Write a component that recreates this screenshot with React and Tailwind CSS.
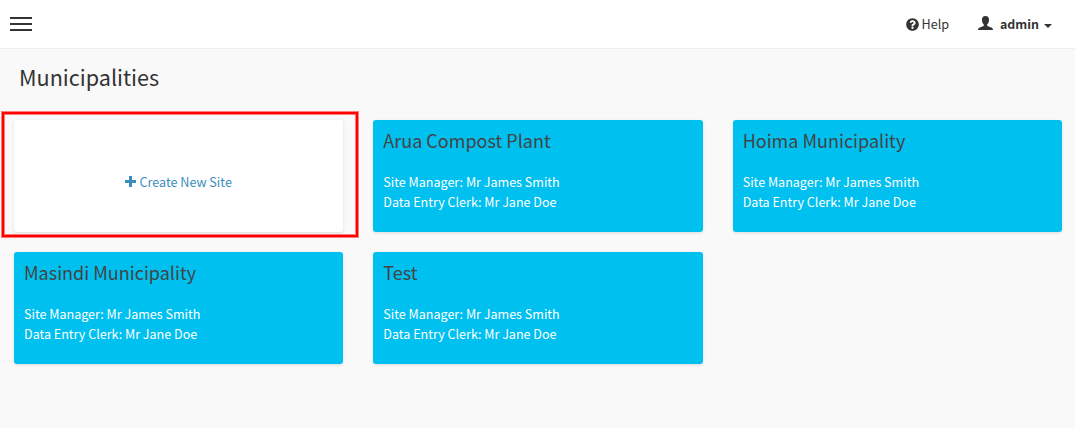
import React from "react";
import { FaQuestionCircle } from "react-icons/fa";

function Card({ title }) {
  return (
    <section className="h-[112px] rounded-[3px] bg-[#00c0ef] px-[10px] pt-2 shadow-[0_1px_3px_rgba(0,0,0,0.12)]">
      <h2 className="whitespace-nowrap text-[18px] leading-6 text-[#444]">{title}</h2>
      <div className="mt-[20px] whitespace-nowrap text-[12.55px] leading-5 text-white">
        <p>Site Manager: Mr James Smith</p>
        <p>Data Entry Clerk: Mr Jane Doe</p>
      </div>
    </section>
  );
}

export default function App() {
  return (
    <div className="h-[428px] overflow-hidden bg-[#f9f9f9] font-['Source_Sans_Pro','Noto_Sans_CJK_SC',sans-serif] text-[#333]">
      <header className="flex h-[49px] items-center justify-between border-b border-[#eee] bg-white pl-[10px] pr-[23px]">
        <button aria-label="Menu" className="flex w-[22px] flex-col gap-1">
          <span className="h-[2px] bg-[#333]" />
          <span className="h-[2px] bg-[#333]" />
          <span className="h-[2px] bg-[#333]" />
        </button>
        <nav className="flex items-center text-[12.6px] leading-5">
          <FaQuestionCircle className="size-[13px]" />
          <span className="ml-[3px]">Help</span>
          <svg viewBox="0 0 14 14" preserveAspectRatio="none" className="-mt-[2px] ml-[29px] h-[14px] w-[15px]" fill="currentColor">
            <path d="M7 0C4.700 0 3.700 1.500 3.700 3.700c0 2.100.7 3.800 1.800 4.800v1c-.2.900-2.300 1.200-3.900 2C.5 12.100 0 12.800 0 14h14c0-1.200-.5-1.900-1.600-2.500-1.600-.8-3.700-1.100-3.900-2v-1c1.100-1 1.800-2.700 1.800-4.800C10.300 1.500 9.300 0 7 0Z" />
          </svg>
          <span className="ml-[7px] text-[12.4px] font-bold">admin</span>
          <svg viewBox="0 0 8 4" className="ml-[5px] mt-[3px] h-1 w-2" fill="currentColor">
            <path d="M0 0h8L4 4Z" />
          </svg>
        </nav>
      </header>
      <h1 className="pl-[19px] pt-3 text-[21.6px] leading-8">Municipalities</h1>
      <main className="mt-[27px] grid grid-cols-3 gap-x-[30px] gap-y-5 pl-[14px] pr-[13px]">
        <section className="relative flex h-[112px] items-center justify-center rounded-[3px] bg-white pt-3 text-[12.6px] leading-5 text-[#3c8dbc] shadow-[0_1px_3px_rgba(0,0,0,0.12)]">
          <svg viewBox="0 0 11 11" className="-mt-px mr-[3px] size-[11px]" fill="currentColor">
            <path d="M4 0h3v4h4v3H7v4H4V7H0V4h4Z" />
          </svg>
          <span>Create New Site</span>
          <div className="pointer-events-none absolute -left-3 -top-[8px] h-[125px] w-[356px] border-2 border-[#f00] shadow-[0_0_0_1px_rgba(255,0,0,0.5),inset_0_0_0_1px_rgba(255,0,0,0.5)]" />
        </section>
        <Card title="Arua Compost Plant" />
        <Card title="Hoima Municipality" />
        <Card title="Masindi Municipality" />
        <Card title="Test" />
      </main>
    </div>
  );
}
